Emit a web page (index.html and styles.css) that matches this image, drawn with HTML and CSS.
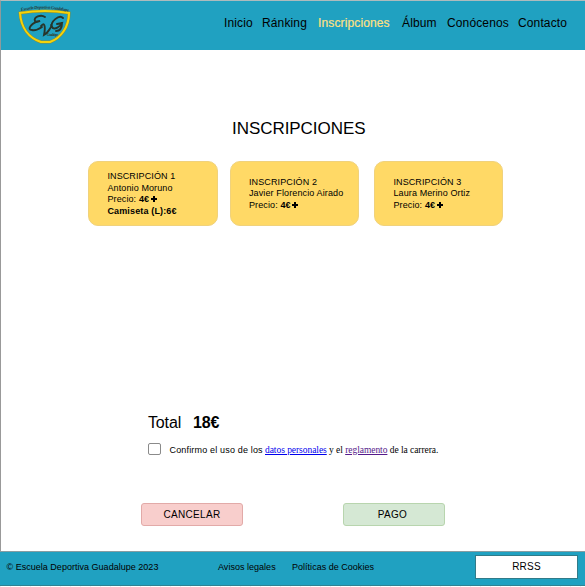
FILE: index.html
```html
<!DOCTYPE html>
<html lang="es">
<head>
<meta charset="utf-8">
<title>Inscripciones</title>
<link rel="stylesheet" href="styles.css">
</head>
<body>
<div class="page">
<header class="header">
  <svg class="logo" width="60" height="44" viewBox="0 0 60 44">
    <defs><path id="arc" d="M6 9Q29 4 55 10"/></defs>
    <path d="M5 11Q30 7 54 11C54 25 46 36 35 40L26 40C14 36 6 26 5 11Z" fill="none" stroke="#8b8c30" stroke-width="3"/>
    <path d="M5 11Q30 7 54 11C54 25 46 36 35 40L26 40C14 36 6 26 5 11Z" fill="none" stroke="#f4d30b" stroke-width="2.1"/>
    <text class="logo-name" textLength="48"><textPath href="#arc">Escuela Deportiva Guadalupe</textPath></text>
    <g class="logo-mark" fill="none" stroke-linecap="round">
      <path d="M30 15C26 12 18 15 20 19C21 21 25 19 25 19C17 20 11 28 17 28C21 29 27 25 27 25M26 24C29 20 31 23 29 33C33 31 37 24 36 23M48 16C44 12 35 20 37 25C39 29 46 24 47 21L42 22M47 21C47 26 45 29 41 29"/>
    </g>
    <text class="logo-place" x="32" y="34" textLength="11">Guadalupe</text>
  </svg>
  <nav class="nav"><a>Inicio</a><a>Ránking</a><a class="active">Inscripciones</a><a>Álbum</a><a>Conócenos</a><a>Contacto</a></nav>
</header>
<main class="main">
  <h1 class="title">INSCRIPCIONES</h1>
  <section class="cards">
    <article class="card"><p>INSCRIPCIÓN 1</p><p>Antonio Moruno</p><p>Precio: <b>4€</b> <i class="plus"></i></p><p><b class="shirt">Camiseta (L):6€</b></p></article>
    <article class="card"><p>INSCRIPCIÓN 2</p><p>Javier Florencio Airado</p><p>Precio: <b>4€</b> <i class="plus"></i></p></article>
    <article class="card"><p>INSCRIPCIÓN 3</p><p>Laura Merino Ortiz</p><p>Precio: <b>4€</b> <i class="plus"></i></p></article>
  </section>
  <div class="total"><span>Total</span><b>18€</b></div>
  <div class="confirm"><span class="check"></span><span class="lead">Confirmo el uso de los</span><span class="terms"><a class="link">datos personales</a> y el <a class="link visited">reglamento</a> de la carrera.</span></div>
  <div class="actions"><button class="button cancel">CANCELAR</button><button class="button pay">PAGO</button></div>
</main>
<footer class="footer">
  <span class="copyright">© Escuela Deportiva Guadalupe 2023</span><span class="legal">Avisos legales</span><span class="cookies">Políticas de Cookies</span><span class="social">RRSS</span>
</footer>
<div class="ruler"></div>
</div>
</body>
</html>
```
FILE: styles.css
```css
* { box-sizing: border-box; }
body { margin: 0; background: #fff; color: #000; font-family: "Liberation Sans", Arial, sans-serif; overflow: hidden; }
.page { width: 585px; height: 587px; display: flex; flex-direction: column; }
.header { height: 50px; flex: none; display: flex; background: #20a1c1; border-top: 1px solid #aebbbd; border-left: 1px solid #8d9a9c; }
.logo { margin: 1px 0 0 14px; flex: none; }
.logo-name { font: italic bold 4.5px "Liberation Serif", serif; fill: #263c3b; }
.logo-mark { stroke: #27352b; stroke-width: 1.9; }
.logo-place { font: italic bold 3.5px "Liberation Serif", serif; fill: #34432f; }
.nav { display: grid; grid-template-columns: 38px 56px 84px 45px 71px 60px; margin-left: 149px; padding-top: 14px; font-size: 12px; line-height: 16px; letter-spacing: .13px; white-space: nowrap; }
.active { color: #ffe082; -webkit-text-stroke: .2px #ffe082; }
.main { height: 501px; flex: none; border-left: 1px solid #999; }
.title { margin: 0; padding: 69px 0 0 231px; font-size: 17px; font-weight: 400; line-height: 20px; letter-spacing: -.05px; }
.cards { display: grid; grid-template-columns: 130px 130px 130px; column-gap: 13px; margin: 22px 0 0 87px; }
.card { height: 65px; display: flex; flex-direction: column; justify-content: center; padding: 1px 0 0 18.4px; border: 1px solid #f0d27c; border-radius: 10px; background: #ffd966; font-size: 9px; line-height: 11.5px; letter-spacing: .12px; white-space: nowrap; }
.card:nth-child(2) { margin-left: -1px; margin-right: 2px; padding-left: 18px; }
.card:nth-child(3) { margin-right: 1px; margin-left: 0; }
.card p { margin: 0; }
.shirt { letter-spacing: .15px; }
.plus { display: inline-block; width: 6px; height: 6px; margin-left: -1px; background: linear-gradient(#000,#000) center/6px 2px no-repeat, linear-gradient(#000,#000) center/2px 6px no-repeat; }
.total { display: flex; gap: 12px; margin: 187px 0 0 147px; font-size: 16px; line-height: 20px; letter-spacing: -.15px; }
.confirm { display: flex; margin: 9px 0 0 147px; height: 14px; line-height: 16px; white-space: nowrap; }
.check { width: 13px; height: 12px; margin-top: 1px; border: 1px solid #8a8a8a; border-radius: 2px; }
.lead { width: 95.5px; margin-left: 8.5px; font-size: 9px; letter-spacing: .17px; }
.terms { font-family: "Liberation Serif", serif; font-size: 9.5px; letter-spacing: -.05px; }
.link { color: #0000ee; text-decoration: underline; }
.visited { color: #551a8b; }
.actions { display: flex; gap: 100px; margin: 47px 0 0 140px; }
.button { width: 102px; height: 23px; padding: 0; border: 1px solid; border-radius: 3px; font: 10px "Liberation Sans", Arial, sans-serif; letter-spacing: .3px; color: #000; }
.cancel { background: #f8cecc; border-color: #e2aaa8; }
.pay { background: #d5e8d4; border-color: #b8d5ae; padding-right: 3px; }
.footer { height: 35px; flex: none; display: flex; border-top: 1px solid #879da2; border-bottom: 1px solid #318293; background: #20a1c1; padding-left: 6.5px; font-size: 9px; line-height: 30px; white-space: nowrap; }
.copyright { width: 211.5px; letter-spacing: .02px; }
.legal { width: 74px; letter-spacing: .02px; }
.cookies { width: 183px; letter-spacing: .02px; }
.social { width: 103px; height: 24px; margin-top: 3px; border: 1px solid #317b89; background: #fff; text-align: center; font-size: 10px; line-height: 22px; letter-spacing: .2px; }
.ruler { height: 1px; background: repeating-linear-gradient(90deg, #eee 0 1px, #fff 1px 10px); }
```
